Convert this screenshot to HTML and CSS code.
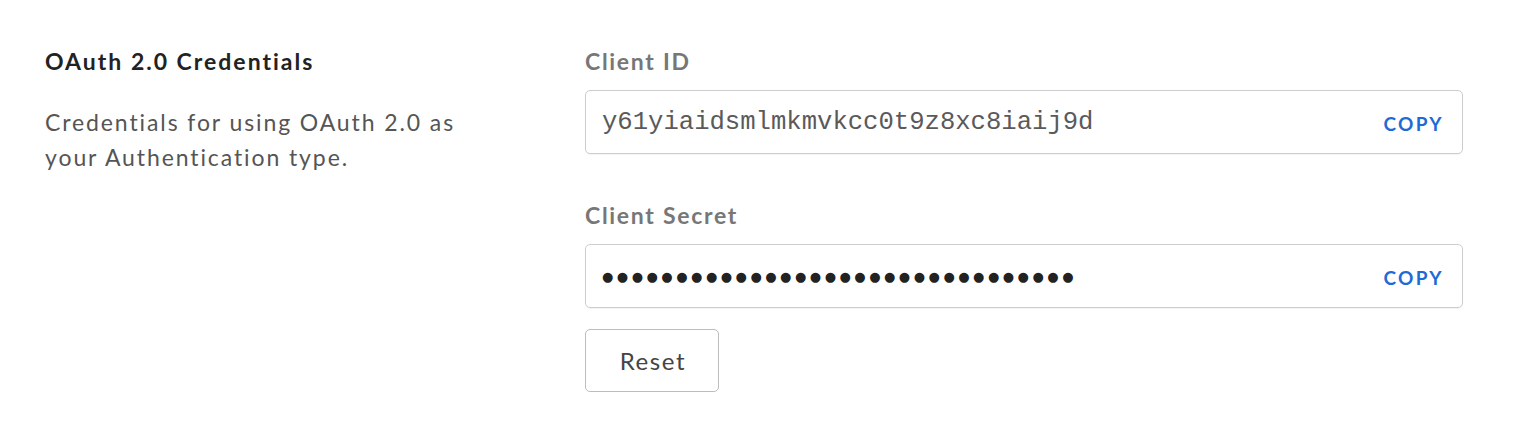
FILE: index.html
```html
<!DOCTYPE html>
<html lang="en">
<head>
<meta charset="utf-8">
<title>OAuth 2.0 Credentials</title>
<link rel="stylesheet" href="styles.css">
</head>
<body>
<section class="settings-row">
  <div class="intro">
    <h2 class="intro-title">OAuth 2.0 Credentials</h2>
    <p class="intro-text">Credentials for using OAuth 2.0 as your Authentication type.</p>
  </div>
  <div class="fields">
    <div class="field">
      <div class="field-label">Client ID</div>
      <div class="field-box">
        <span class="field-value mono">y61yiaidsmlmkmvkcc0t9z8xc8iaij9d</span>
        <button class="copy-btn" type="button">COPY</button>
      </div>
    </div>
    <div class="field">
      <div class="field-label">Client Secret</div>
      <div class="field-box">
        <span class="field-value dots">●●●●●●●●●●●●●●●●●●●●●●●●●●●●●●●●</span>
        <button class="copy-btn" type="button">COPY</button>
      </div>
    </div>
    <button class="reset-btn" type="button">Reset</button>
  </div>
</section>
</body>
</html>
```
FILE: styles.css
```css
* { box-sizing: border-box; }

html, body {
  margin: 0;
  padding: 0;
  background: #ffffff;
}

body {
  font-family: Lato, "Open Sans", "Liberation Sans", sans-serif;
  color: #333;
}

.settings-row {
  display: grid;
  grid-template-columns: 540px 878px;
  padding: 47px 0 0 45px;
}

.intro-title {
  margin: 0;
  font-size: 23px;
  line-height: 28px;
  font-weight: 700;
  letter-spacing: 2px;
  color: #222;
}

.intro-text {
  margin: 30px 0 0;
  width: 450px;
  font-size: 23px;
  line-height: 35px;
  letter-spacing: 1.9px;
  color: #555;
}

.fields {
  display: flex;
  flex-direction: column;
  align-items: flex-start;
}

.field {
  width: 100%;
  margin-bottom: 47px;
}

.field + .field {
  margin-bottom: 21px;
}

.field-label {
  font-size: 23px;
  line-height: 28px;
  font-weight: 700;
  letter-spacing: 1.7px;
  color: #777;
  margin-bottom: 15px;
}

.field-box {
  display: flex;
  align-items: center;
  justify-content: space-between;
  height: 64px;
  padding: 0 18px 0 16px;
  border: 1px solid #cdcdcd;
  border-radius: 5px;
  box-shadow: 0 1px 1px rgba(0,0,0,0.05);
}

.field-value {
  color: #444;
}

.mono {
  font-family: "Liberation Mono", "Courier New", monospace;
  font-size: 25.6px;
  color: #5a5a5a;
}

.dots {
  font-family: "DejaVu Sans", sans-serif;
  font-size: 13px;
  letter-spacing: 3.5px;
  color: #222;
}

.copy-btn {
  border: 0;
  background: none;
  padding: 3px 0 0;
  font-family: Lato, "Liberation Sans", sans-serif;
  font-weight: 700;
  font-size: 19px;
  letter-spacing: 2.3px;
  color: #1f6bd6;
  cursor: pointer;
}

.reset-btn {
  width: 134px;
  height: 63px;
  padding: 0 0 0 2px;
  border: 1px solid #bdbdbd;
  border-radius: 5px;
  background: #fff;
  font-family: Lato, "Liberation Sans", sans-serif;
  font-size: 24px;
  letter-spacing: 1.6px;
  color: #444;
  cursor: pointer;
}
```
